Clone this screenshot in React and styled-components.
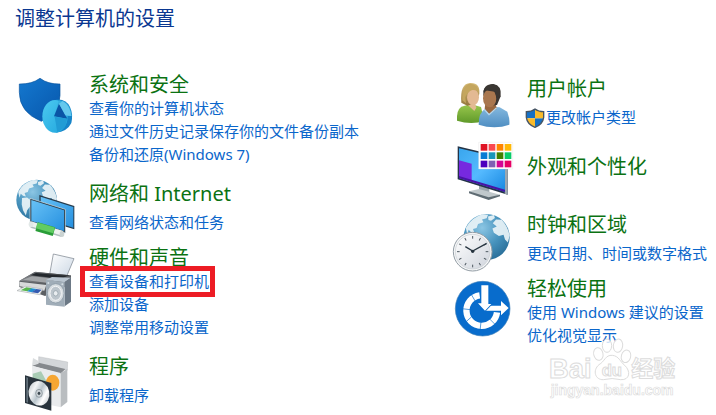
import React from "react";
import styled, { createGlobalStyle, css } from "styled-components";

const GlobalStyle = createGlobalStyle`
  *, *::before, *::after { box-sizing: border-box; }
  body {
    margin: 0;
    background: #fff;
    font-family: "Noto Sans", "Noto Sans CJK SC", sans-serif;
  }
`;

const Page = styled.main`
  position: relative;
  min-height: 100vh;
  padding: 4px 8px 0 15px;
`;

const Title = styled.h1`
  margin: 0;
  font-size: 20px;
  font-weight: 400;
  line-height: 30px;
  color: #0a3791;
`;

const Columns = styled.div`
  display: grid;
  grid-template-columns: minmax(0, 1fr) 255px;
`;

const Column = styled.div`
  display: flex;
  flex-direction: column;
  gap: 10px;
  padding-top: ${(p) => p.$top}px;
`;

const Category = styled.section`
  display: grid;
  grid-template-columns: 60px minmax(0, 1fr);
  column-gap: 14px;
  align-items: start;
`;

const Icon = styled.svg`
  display: block;
  width: 60px;
  height: 60px;
  margin-bottom: -6px;
  overflow: visible;
`;

const Heading = styled.h2`
  margin: 0 0 -2px;
  padding-top: ${(p) => (p.$alone ? 10 : 0)}px;
  padding-bottom: ${(p) => (p.$alone ? 22 : 0)}px;
  font-size: 20px;
  font-weight: 400;
  line-height: 28px;

  a { color: #0b7212; text-decoration: none; }
`;

const TaskList = styled.ul`
  margin: 0;
  list-style: none;
  padding: ${(p) => (p.$single ? "5px 0 0" : "0 0 4px")};
`;

const Task = styled.li`
  display: flex;
  align-items: center;
  height: 23px;
  margin-bottom: ${(p) => (p.$shielded ? 4 : 0)}px;
  white-space: nowrap;
`;

const TaskLink = styled.a`
  position: relative;
  font-size: 15px;
  line-height: 23px;
  color: #0a66cb;
  text-decoration: none;

  ${(p) => p.$marked && css`
    &::after {
      content: "";
      position: absolute;
      inset: -4px -6px -4px -9px;
      border: 5px solid #ed1c24;
    }
  `}
`;

const ShieldBadge = styled.svg`
  width: 20px;
  height: 20px;
  margin-left: -2px;
  margin-right: 1px;
`;

const Watermark = styled.svg`
  position: absolute;
  right: 36px;
  bottom: 12px;
  width: 132px;
  height: 65px;
  pointer-events: none;
`;

function SecurityIcon() {
  return (
    <Icon viewBox="15 18 180 180" aria-hidden="true">
      <defs>
        <linearGradient id="secShield" x1="0" y1="0" x2="1" y2="1">
          <stop offset="0" stopColor="#1478cf" /><stop offset="1" stopColor="#0756ab" />
        </linearGradient>
        <linearGradient id="secPie" x1="0" y1="0" x2="1" y2="1">
          <stop offset="0" stopColor="#4ccaf0" /><stop offset="1" stopColor="#20a5dd" />
        </linearGradient>
      </defs>
      <path d="M28 57Q65 58 90 40Q114 58 150 57V92Q148 142 94 169Q28 142 28 82Z" fill="url(#secShield)" stroke="#0a549f" strokeWidth="2" />
      <path d="M137 104Q168 100 180 126Q190 148 184 174Q172 200 137 203Z" fill="#1684c8" />
      <ellipse cx="135" cy="154" rx="38" ry="49" fill="url(#secPie)" />
      <path d="M146 106Q180 108 185 153L134 153Z" fill="#35b0e1" />
      <path d="M147 116L132 154L172 161Z" fill="#0a55a6" />
      <path d="M147 116L166 151L184 153Q180 121 158 108Z" fill="#64c8ed" />
      <path d="M134 155L172 161L165 187L142 202Z" fill="#219cd5" />
    </Icon>
  );
}

function Globe({ id, cx, cy, r }) {
  return (
    <g transform={`translate(${cx} ${cy}) scale(${r / 64})`}>
      <defs>
        <radialGradient id={id} cx=".4" cy=".3" r=".75">
          <stop offset="0" stopColor="#8cc6e4" /><stop offset=".55" stopColor="#4793bd" /><stop offset="1" stopColor="#286d98" />
        </radialGradient>
      </defs>
      <circle r="64" fill={`url(#${id})`} />
      <g fill="#eaf4f8" opacity=".92">
        <path d="M-58-25Q-44-53-12-63L4-62L0-52L-13-49L-9-41L-24-36L-28-25L-38-22L-34-11L-43-13L-50-20L-54-7Z" />
        <path d="M-46-6L-30-8L-15 4L-19 18L-30 32L-34 49L-43 32L-47 14Z" />
        <path d="M4-57L20-61L23-53L12-45L5-47Z" />
        <path d="M17-38L26-49L42-48Q60-27 64-4L59 15L51 7L47-6L34-3L20-12L16-24L28-29Z" />
      </g>
    </g>
  );
}

function NetworkIcon() {
  return (
    <Icon viewBox="15 24 180 180" aria-hidden="true">
      <defs>
        <linearGradient id="netScreen" x1="0" y1="0" x2="1" y2="1">
          <stop offset="0" stopColor="#68c2f6" /><stop offset="1" stopColor="#258fdf" />
        </linearGradient>
      </defs>
      <Globe id="netGlobe" cx={80} cy={84} r={61} />
      <path d="M88 69L193 102V172L88 140Z" fill="#273c4d" />
      <path d="M92 74L190 105V167L92 136Z" fill="url(#netScreen)" />
      <path d="M60 79L166 112V183L60 151Z" fill="#263a48" stroke="#d9e8f0" strokeWidth="2" />
      <path d="M64 84L162 115V177L64 147Z" fill="url(#netScreen)" />
      <path d="M64 158L157 186" stroke="#b2bec0" strokeWidth="19" />
      <path d="M64 156L157 184" stroke="#eef2ef" strokeWidth="14" />
      <ellipse cx="63" cy="157" rx="7" ry="9" fill="#e2e8e7" />
      <path d="M80 164L132 179" stroke="#299d38" strokeWidth="27" />
      <path d="M80 160L132 175" stroke="#62cc63" strokeWidth="18" />
      <ellipse cx="156" cy="186" rx="7" ry="9" fill="#cbd3d2" />
    </Icon>
  );
}

function PrinterIcon() {
  return (
    <Icon viewBox="15 -3 180 180" aria-hidden="true">
      <defs>
        <linearGradient id="prnPaper" x1="0" y1="0" x2="1" y2="1">
          <stop offset="0" stopColor="#fff" /><stop offset="1" stopColor="#cbd7e4" />
        </linearGradient>
        <linearGradient id="prnBody" x1="0" y1="0" x2="1" y2="0">
          <stop offset="0" stopColor="#85888c" /><stop offset="1" stopColor="#303337" />
        </linearGradient>
      </defs>
      <path d="M130 27L192 41L169 96L119 88Z" fill="url(#prnPaper)" stroke="#737c86" strokeWidth="2" />
      <path d="M28 108L74 81L183 91L183 118L105 153L28 126Z" fill="#5b5f63" />
      <path d="M28 107L76 80L178 91L117 118Z" fill="url(#prnBody)" />
      <path d="M78 84L169 93L153 101L61 91Z" fill="#24282d" />
      <path d="M39 104L66 94L140 101L108 113Z" fill="#a2a5a8" />
      <path d="M28 110L109 120L103 137L29 124Z" fill="#d7d9da" />
      <path d="M46 124L98 132L89 149L21 137Z" fill="#f5f6f7" stroke="#abafb1" strokeWidth="2" />
      <path d="M49 127L67 130L52 139L32 136Z" fill="#58b64c" />
      <path d="M65 130L80 132L66 142L51 139Z" fill="#218ed0" />
      <path d="M79 132L95 134L84 145L65 142Z" fill="#355bb1" />
      <path d="M108 105L126 96L183 98L164 112Z" fill="#b9c5d0" />
      <path d="M164 111L183 98V170L164 184Z" fill="#6c7986" />
      <path d="M108 105L164 111V185L108 179Z" fill="#a0adb8" />
      <ellipse cx="137" cy="145" rx="25" ry="29" fill="#d7dde1" stroke="#8796a2" strokeWidth="2" />
      <ellipse cx="137" cy="145" rx="17" ry="21" fill="#bcc5cc" stroke="#f5f6f7" strokeWidth="3" />
      <ellipse cx="137" cy="145" rx="7" ry="8" fill="#e9edf0" stroke="#8c9ba5" strokeWidth="2" />
      <circle cx="115" cy="114" r="3" fill="#d3dde3" /><circle cx="157" cy="118" r="3" fill="#d3dde3" />
    </Icon>
  );
}

function ProgramsIcon() {
  return (
    <Icon viewBox="15 24 180 180" aria-hidden="true">
      <defs>
        <linearGradient id="cdShine" x1="0" y1="0" x2="1" y2="1">
          <stop offset="0" stopColor="#b0b8bd" /><stop offset=".3" stopColor="#f3f5f6" /><stop offset=".5" stopColor="#b9c5cc" /><stop offset=".7" stopColor="#fff" /><stop offset="1" stopColor="#b0b8bd" />
        </linearGradient>
      </defs>
      <path d="M86 35L173 51L172 76L86 63Z" fill="#d3d6d9" stroke="#a6a9ac" />
      <path d="M66 62L86 53L166 72L152 86Z" fill="#85898d" />
      <path d="M66 62L152 84V187L70 169Z" fill="#e9ebed" />
      <path d="M152 84L172 72V171L152 187Z" fill="#b9bdc0" />
      <path d="M68 86L93 79L116 121L69 116Z" fill="#a9ccb5" />
      <ellipse cx="128" cy="113" rx="20" ry="24" fill="#f6a632" />
      <path d="M66 62L69 39L84 47L86 56Z" fill="#dadddf" />
      <path d="M45 91L124 114V197L45 174Z" fill="#28333c" />
      <path d="M49 96L54 98V173L49 171Z" fill="#63717b" />
      <ellipse cx="87" cy="145" rx="31" ry="37" fill="url(#cdShine)" transform="rotate(-12 87 145)" />
      <ellipse cx="87" cy="145" rx="10" ry="12" fill="#cad1d5" stroke="#77838b" strokeWidth="2" />
      <ellipse cx="87" cy="145" rx="4" ry="5" fill="#3c484f" />
    </Icon>
  );
}

function UsersIcon() {
  return (
    <Icon viewBox="24 0 180 180" aria-hidden="true">
      <defs>
        <linearGradient id="usrGreen" x1="0" y1="0" x2="0" y2="1">
          <stop offset="0" stopColor="#9bc84e" /><stop offset="1" stopColor="#609a2a" />
        </linearGradient>
        <linearGradient id="usrBlue" x1="0" y1="0" x2="0" y2="1">
          <stop offset="0" stopColor="#85b9df" /><stop offset="1" stopColor="#4f8ec2" />
        </linearGradient>
        <linearGradient id="usrHair" x1="0" y1="0" x2="0" y2="1">
          <stop offset="0" stopColor="#d7bd79" /><stop offset="1" stopColor="#94763d" />
        </linearGradient>
      </defs>
      <path d="M36 137Q34 105 49 95L77 87L108 96L118 138Q78 150 36 137Z" fill="url(#usrGreen)" />
      <path d="M65 87L89 84L94 98L88 108Z" fill="#e3ba91" />
      <path d="M49 83Q44 25 76 24Q106 23 103 57L91 85L67 92Z" fill="url(#usrHair)" />
      <ellipse cx="84" cy="67" rx="18" ry="24" fill="#e3b993" />
      <path d="M61 67Q67 50 82 45Q99 44 102 56Q101 25 73 26Q50 33 52 76L63 85Z" fill="#c4a65e" />
      <path d="M101 149Q101 113 119 103L140 95L164 97L187 110Q195 130 193 149Q149 164 101 149Z" fill="url(#usrBlue)" />
      <path d="M121 85L151 86L156 101L133 117L119 102Z" fill="#996840" />
      <path d="M115 60Q113 27 145 27Q171 31 167 64L156 90L130 94Z" fill="#3a3632" />
      <ellipse cx="134" cy="70" rx="20" ry="27" fill="#a9774f" />
      <path d="M115 54L119 46L150 50L156 78L163 65Q170 33 142 28Q117 31 115 54Z" fill="#3a3632" />
      <path d="M118 103L132 119L155 98" fill="none" stroke="#b7d7ec" strokeWidth="4" />
    </Icon>
  );
}

const SWATCHES = [
  "#df1425", "#fa4850", "#ff8500", "#ffb808",
  "#087bd4", "#1796ba", "#418000", "#08cc69",
  "#4c00bd", "#8060b4", "#d30795", "#e60065",
];

function AppearanceIcon() {
  return (
    <Icon viewBox="24 24 180 180" aria-hidden="true">
      <defs>
        <linearGradient id="appScreen" x1="0" y1="0" x2="1" y2="1">
          <stop offset="0" stopColor="#39a6ed" /><stop offset=".5" stopColor="#55baff" /><stop offset="1" stopColor="#1787e0" />
        </linearGradient>
      </defs>
      <path d="M102 149L133 158V178L102 170Z" fill="#9aa5ab" />
      <path d="M72 169L102 162L165 179L131 193Z" fill="#c0c8cb" />
      <path d="M72 169L131 187L165 179V184L131 195L72 175Z" fill="#5f6c73" />
      <path d="M38 34L188 70V179L38 133Z" fill="#243447" />
      <path d="M179 68L188 70V179L179 176Z" fill="#9ba7b0" />
      <path d="M42 40L180 72V171L42 129Z" fill="url(#appScreen)" />
      <path d="M42 76L80 86V139L42 127Z" fill="#7629df" />
      <path d="M42 123L180 164V171L42 130Z" fill="#4814a4" />
      <path d="M101 22H203V102H101Z" fill="#fff" stroke="#dedede" />
      {SWATCHES.map((fill, i) => (
        <rect key={fill} x={107 + (i % 4) * 24} y={27 + Math.floor(i / 4) * 25} width="20" height="20" fill={fill} />
      ))}
    </Icon>
  );
}

function ClockIcon() {
  const ticks = Array.from({ length: 12 }, (_, i) => i * 30);
  return (
    <Icon viewBox="24 18 180 180" aria-hidden="true">
      <defs>
        <linearGradient id="clkFace" x1="0" y1="0" x2="1" y2="1">
          <stop offset="0" stopColor="#fff" /><stop offset="1" stopColor="#cfd4dc" />
        </linearGradient>
      </defs>
      <Globe id="clkGlobe" cx={125} cy={96} r={69} />
      <circle cx="83" cy="140" r="58" fill="#f5f6f7" stroke="#939da5" strokeWidth="3" />
      <circle cx="83" cy="140" r="52" fill="url(#clkFace)" stroke="#c7cdd2" strokeWidth="2" />
      {ticks.map((a) => (
        <path key={a} d="M83 93V101" stroke="#4e5860" strokeWidth="3" transform={`rotate(${a} 83 140)`} />
      ))}
      <path d="M61 125L83 138L125 115" fill="none" stroke="#26343f" strokeWidth="4" />
      <circle cx="83" cy="139" r="5" fill="#26343f" />
    </Icon>
  );
}

function EaseIcon() {
  return (
    <Icon viewBox="24 0 180 180" aria-hidden="true">
      <circle cx="113" cy="101" r="82" fill="#086ccc" stroke="#3c7db7" strokeWidth="2" />
      <path d="M104 61A46 46 0 1 0 156 112" fill="none" stroke="#fff" strokeWidth="19" />
      <path d="M77 55L91 79M50 101L76 104M60 143L79 126M105 168L108 140M150 148L132 130" stroke="#086ccc" strokeWidth="2" />
      <g fill="#fff" stroke="#086ccc" strokeWidth="5" paintOrder="stroke">
        <path d="M118 92H168V78L191 99L168 121V107H118Z" />
        <path d="M109 31H130V87H139L120 107L99 85H109Z" />
      </g>
    </Icon>
  );
}

function UacShield() {
  return (
    <ShieldBadge viewBox="0 0 60 60" aria-hidden="true">
      <clipPath id="uacClip"><path d="M4 11Q20 11 30 3Q40 11 56 11V28Q54 48 30 58Q6 48 4 28Z" /></clipPath>
      <g clipPath="url(#uacClip)">
        <path d="M0 0H30V31H0ZM30 31H60V60H30Z" fill="#1670c5" />
        <path d="M30 0H60V31H30ZM0 31H30V60H0Z" fill="#fabb2b" />
      </g>
      <path d="M4 11Q20 11 30 3Q40 11 56 11V28Q54 48 30 58Q6 48 4 28Z" fill="none" stroke="#465565" strokeWidth="4" />
    </ShieldBadge>
  );
}

const LEFT = [
  { icon: SecurityIcon, title: "系统和安全", tasks: ["查看你的计算机状态", "通过文件历史记录保存你的文件备份副本", "备份和还原(Windows 7)"] },
  { icon: NetworkIcon, title: "网络和 Internet", tasks: ["查看网络状态和任务"] },
  { icon: PrinterIcon, title: "硬件和声音", tasks: ["查看设备和打印机", "添加设备", "调整常用移动设置"], marked: 0 },
  { icon: ProgramsIcon, title: "程序", tasks: ["卸载程序"] },
];

const RIGHT = [
  { icon: UsersIcon, title: "用户帐户", tasks: ["更改帐户类型"], shielded: true },
  { icon: AppearanceIcon, title: "外观和个性化", tasks: [] },
  { icon: ClockIcon, title: "时钟和区域", tasks: ["更改日期、时间或数字格式"] },
  { icon: EaseIcon, title: "轻松使用", tasks: ["使用 Windows 建议的设置", "优化视觉显示"] },
];

function CategoryEntry({ icon: CategoryIcon, title, tasks, marked, shielded }) {
  return (
    <Category>
      <CategoryIcon />
      <div>
        <Heading $alone={tasks.length === 0}><a href="#category">{title}</a></Heading>
        {tasks.length > 0 && (
          <TaskList $single={tasks.length === 1}>
            {tasks.map((task, i) => (
              <Task key={task} $shielded={shielded}>
                {shielded && <UacShield />}
                <TaskLink href="#task" $marked={marked === i}>{task}</TaskLink>
              </Task>
            ))}
          </TaskList>
        )}
      </div>
    </Category>
  );
}

function BaiduMark() {
  return (
    <Watermark viewBox="54 24 396 195" aria-label="Baidu 经验">
      <g fill="#fff" fillOpacity=".8" stroke="#dcdcdc" strokeWidth="3" fontFamily='"Liberation Sans", "Noto Sans CJK SC", sans-serif' fontWeight="700">
        <ellipse cx="205" cy="72" rx="14" ry="19" transform="rotate(-12 205 72)" />
        <ellipse cx="231" cy="47" rx="14" ry="20" />
        <ellipse cx="264" cy="47" rx="14" ry="20" transform="rotate(8 264 47)" />
        <ellipse cx="288" cy="79" rx="14" ry="19" transform="rotate(15 288 79)" />
        <path d="M247 76C226 74 224 95 207 104C187 121 195 150 220 149Q247 142 272 149C300 151 303 123 284 106C270 95 267 78 247 76Z" />
        <text x="57" y="143" fontSize="82">Bai</text>
        <text x="215" y="137" fontSize="50">du</text>
        <text x="304" y="138" fontSize="66">经验</text>
        <text x="62" y="196" fontSize="42" strokeWidth="2">jingyan.baidu.com</text>
      </g>
    </Watermark>
  );
}

export default function App() {
  return (
    <>
      <GlobalStyle />
      <Page>
        <Title>调整计算机的设置</Title>
        <Columns>
          <Column $top={37}>{LEFT.map((c) => <CategoryEntry key={c.title} {...c} />)}</Column>
          <Column $top={41}>{RIGHT.map((c) => <CategoryEntry key={c.title} {...c} />)}</Column>
        </Columns>
        <BaiduMark />
      </Page>
    </>
  );
}
